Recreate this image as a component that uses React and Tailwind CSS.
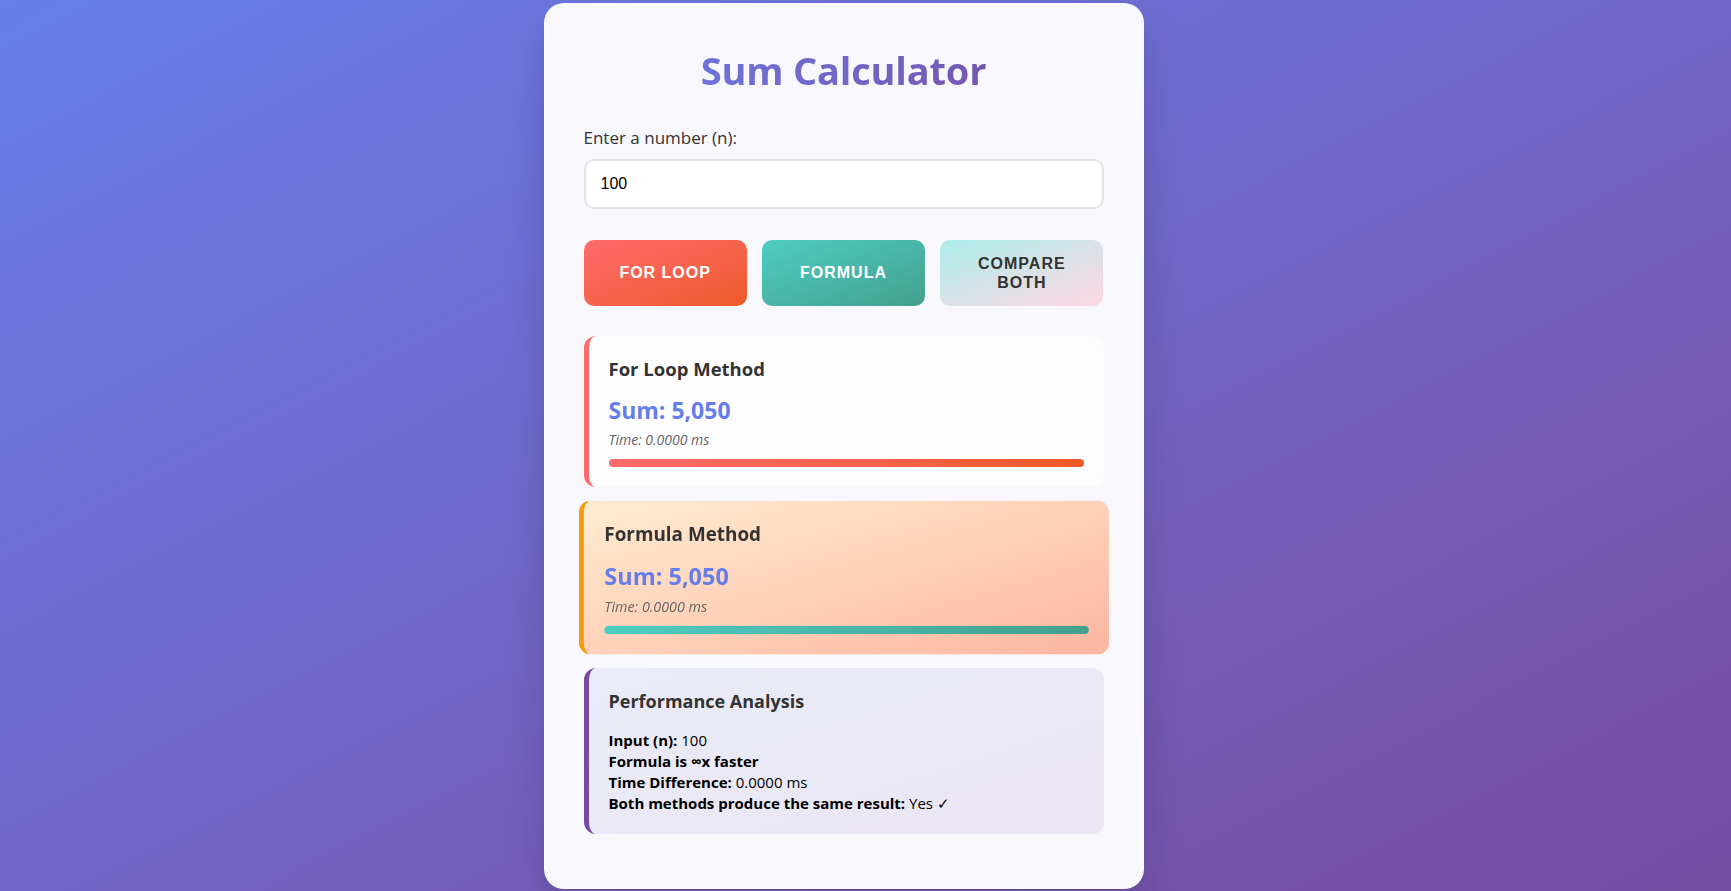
import { useState } from "react";

const ResultCard = ({ title, sum, time, accent, bar, highlight }) => (
    <div
        className={`rounded-[12px] border-l-[5px] px-5 pt-[21px] pb-5 ${accent} ${
            highlight ? "scale-[1.02] bg-gradient-to-br from-[#ffecd2] to-[#fcb69f]" : "bg-[#fdfdfe]"
        }`}
    >
        <h3 className="text-[18.5px] font-bold leading-[24px] text-[#333]">{title}</h3>
        <div className="mt-[13px] text-[23px] font-bold leading-[32px] text-[#667eea]">Sum: {sum}</div>
        <div className="mt-[4px] text-[14px] italic leading-[19px] text-[#666]">Time: {time} ms</div>
        <div className={`mt-[10px] h-[8px] rounded-full bg-gradient-to-r ${bar}`} />
    </div>
);

export default function App() {
    const [n, setN] = useState("100");

    return (
        <div className="min-h-[891px] w-full bg-gradient-to-br from-[#667eea] to-[#764ba2] flex justify-center pr-[44px] font-['Open_Sans',sans-serif]">
            <div className="mt-[3px] mb-[2px] w-[600px] rounded-[20px] bg-[#f8f8fc] px-10 pt-10 pb-[55px] shadow-[0_20px_40px_rgba(0,0,0,0.15)]">
                <h1 className="h-[55px] text-center text-[38px] font-bold leading-[55px] tracking-[-0.2px] bg-gradient-to-r from-[#667eea] to-[#764ba2] bg-clip-text text-transparent">
                    Sum Calculator
                </h1>

                <label className="mt-[29px] block text-[17px] font-medium leading-[22px] text-[#333]">
                    Enter a number (n):
                </label>
                <input
                    type="number"
                    value={n}
                    onChange={(e) => setN(e.target.value)}
                    className="mt-[10px] block h-[50px] w-full rounded-[10px] border-2 border-[#e1e5e9] bg-white px-[15px] text-[16px] text-black outline-none font-['Liberation_Sans',Arial,sans-serif]"
                />

                <div className="mt-[31px] grid grid-cols-3 gap-[15px] font-['Liberation_Sans',Arial,sans-serif]">
                    <button className="h-[66px] rounded-[10px] bg-gradient-to-br from-[#ff6b6b] to-[#ee5a24] text-[16px] font-bold uppercase tracking-[1px] text-white">
                        For Loop
                    </button>
                    <button className="h-[66px] rounded-[10px] bg-gradient-to-br from-[#4ecdc4] to-[#44a08d] text-[16px] font-bold uppercase tracking-[1px] text-white">
                        Formula
                    </button>
                    <button className="h-[66px] rounded-[10px] bg-gradient-to-br from-[#a8edea] to-[#fed6e3] px-8 text-[16px] font-bold uppercase leading-[19px] tracking-[1px] text-[#333]">
                        Compare Both
                    </button>
                </div>

                <div className="mt-[30px] flex flex-col gap-[15px]">
                    <ResultCard
                        title="For Loop Method"
                        sum="5,050"
                        time="0.0000"
                        accent="border-[#ff6b6b]"
                        bar="from-[#ff6b6b] to-[#ee5a24]"
                    />
                    <ResultCard
                        title="Formula Method"
                        sum="5,050"
                        time="0.0000"
                        accent="border-[#f39c12]"
                        bar="from-[#4ecdc4] to-[#44a08d]"
                        highlight
                    />
                    <div className="rounded-[12px] border-l-[5px] border-[#764ba2] bg-gradient-to-br from-[#e9ebf8] to-[#ebe6f2] px-5 pt-[21px] pb-5 text-black">
                        <h3 className="text-[18px] font-bold leading-[24px] text-[#333]">Performance Analysis</h3>
                        <div className="mt-[17px] text-[15px] leading-[21px]">
                            <div><b>Input (n):</b> 100</div>
                            <div><b>Formula is ∞x faster</b></div>
                            <div><b>Time Difference:</b> 0.0000 ms</div>
                            <div><b>Both methods produce the same result:</b> Yes ✓</div>
                        </div>
                    </div>
                </div>
            </div>
        </div>
    );
}
